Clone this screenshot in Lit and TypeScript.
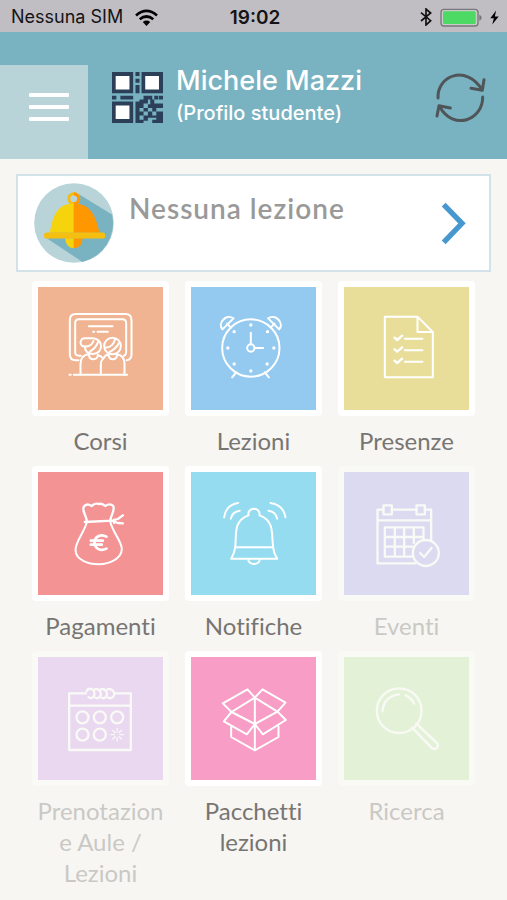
import { LitElement, css, html, svg, SVGTemplateResult } from "lit";
import { customElement, property } from "lit/decorators.js";
import { classMap } from "lit/directives/class-map.js";

interface Tile {
  label: string;
  tone: string;
  viewBox: string;
  icon: SVGTemplateResult;
  disabled?: boolean;
}

const circles = (points: number[][], r: number) =>
  points.map(([x, y]) => svg`<circle cx=${x} cy=${y} r=${r} />`);

const tiles: Tile[] = [
  {
    label: "Corsi",
    tone: "orange",
    viewBox: "43 36 372 369",
    icon: svg`
      <path d="M163 256H155Q137 256 137 238V136Q137 117 155 117H304Q322 117 322 136V238Q322 254 308 256" />
      <path d="M170 242H164Q153 242 153 231V144Q153 133 164 133H295Q306 133 306 144V230Q306 240 299 242" />
      <path d="M194 154H265M207 170H210M220 170H251M136 299H140M149 299H309" />
      <path d="M169 299V266Q169 241 194 238Q195 253 208 253Q220 252 221 240Q231 243 237 251Q230 258 230 268V299M237 251Q243 240 253 238Q254 253 266 253Q278 252 279 238Q301 243 301 266V299" />
      <circle cx="265" cy="213" r="25" />
      <path d="M182 214C166 216 164 191 181 190H207C239 192 238 236 207 237C190 237 182 228 182 214Q201 216 208 198M222 200Q216 219 198 229M242 218Q267 218 273 192M284 205Q275 222 256 231" />`,
  },
  {
    label: "Lezioni",
    tone: "blue",
    viewBox: "36 36 372 369",
    icon: svg`
      <circle cx="214" cy="219" r="86" />
      <circle cx="214" cy="219" r="11" />
      <path d="M214 208V173M225 219H251M158 307L170 292M268 307L256 292M143 146L154 158M285 146L273 158" />
      <path d="M129 163C113 145 139 115 162 130ZM299 163C315 145 289 115 266 130Z" />
      <g class="solid">${circles([[214, 150], [264, 170], [283, 219], [263, 267], [214, 288], [164, 267], [145, 219], [164, 170]], 5)}</g>`,
  },
  {
    label: "Presenze",
    tone: "yellow",
    viewBox: "30 36 372 369",
    icon: svg`
      <path d="M151 125H249L295 171V307H151ZM249 125V171H295" />
      <path d="M211 191H264M211 226H264M211 260H264" />
      <path class="thick" d="M180 188L188 195L203 182M180 223L188 230L203 217M180 257L188 264L203 251" />`,
  },
  {
    label: "Pagamenti",
    tone: "red",
    viewBox: "43 36 372 369",
    icon: svg`
      <path class="thick" d="M188 183C186 166 172 151 179 140Q187 128 203 138Q211 128 223 132Q234 129 243 138Q258 128 267 138C274 151 259 166 258 183M182 186L263 182M263 182L281 177L296 166M264 183L281 189L296 190M270 179V189" />
      <path d="M188 187C179 220 155 241 154 270C155 300 192 313 224 313C257 312 292 296 293 267C291 239 266 220 258 184" />
      <path class="heavy" d="M247 230C229 220 211 231 211 248C212 267 230 275 247 266M200 242H236M200 254H233" />`,
  },
  {
    label: "Notifiche",
    tone: "cyan",
    viewBox: "36 36 372 369",
    icon: svg`
      <path d="M167 262C172 223 160 183 207 166C202 141 244 139 240 166C287 183 275 223 281 262ZM167 262Q165 279 155 296H293Q282 279 281 262M206 297C207 317 240 317 241 297" />
      <path d="M134 172Q139 135 176 129M154 176Q158 155 181 152M318 172Q312 135 273 129M293 176Q289 155 267 152" />`,
  },
  {
    label: "Eventi",
    tone: "lilac",
    viewBox: "30 36 372 369",
    disabled: true,
    icon: svg`
      <path d="M147 149H129V310H242M172 149H246M271 149H290V239M129 181H290" />
      <path d="M147 136H172V163H147ZM246 136H271V163H246Z" />
      <path d="M235 290H151V202H267V239M151 231H267M151 260H235M181 202V290M209 202V290M238 202V249" />
      <circle cx="274" cy="279" r="39" />
      <path d="M257 279L269 291L291 264" />`,
  },
  {
    label: "Prenotazione Aule / Lezioni",
    tone: "violet",
    viewBox: "43 36 372 369",
    disabled: true,
    icon: svg`
      <path d="M185 145H135V315H320V145H272M135 182H320" />
      <path d="M187 139C193 126 211 131 211 146C210 160 199 162 193 156M211 133C226 128 236 146 226 156Q221 162 214 158M230 133C244 128 254 146 245 156Q240 162 233 158M250 133C264 128 277 146 266 156Q260 162 252 158" />
      ${circles([[175, 217], [227, 217], [279, 217], [175, 269], [227, 269]], 18)}
      <path class="fine" d="M279 250V261M279 277V288M260 269H271M287 269H298M266 256L273 263M285 275L292 282M292 256L285 263M273 275L266 282" />`,
  },
  {
    label: "Pacchetti lezioni",
    tone: "pink",
    viewBox: "36 36 372 369",
    icon: svg`
      <path d="M226 158L204 133L130 175L156 201L133 229L202 268L226 237L250 268L319 225L294 200L318 173L249 133ZM156 201L226 158L294 200L226 237ZM226 158V316M155 245V276L226 316L297 276V245" />`,
  },
  {
    label: "Ricerca",
    tone: "green",
    viewBox: "495 36 372 369",
    disabled: true,
    icon: svg`
      <circle cx="659" cy="197" r="67" />
      <path d="M609 199Q612 155 658 148M679 151Q697 159 704 176M711 236L774 296C779 307 768 315 758 310L698 248" />`,
  },
];

@customElement("status-bar")
export class StatusBar extends LitElement {
  static styles = css`
    :host {
      display: grid;
      grid-template-columns: 1fr auto 1fr;
      align-items: center;
      height: 32px;
      padding: 0 8px 0 11px;
      background: #c0bec3;
      color: #141416;
      font: 400 18px/32px Inter, sans-serif;
    }
    .side {
      display: flex;
      align-items: center;
      gap: 12px;
      white-space: nowrap;
    }
    .end {
      justify-content: flex-end;
      gap: 8px;
    }
    .clock {
      padding-top: 2px;
      font-weight: 600;
      font-size: 19px;
    }
    svg {
      display: block;
    }
  `;

  render() {
    return html`
      <div class="side">
        <span>Nessuna SIM</span>
        <svg width="23" height="17" viewBox="408 24 68 50" aria-hidden="true">
          <path d="M411 43Q442 16 473 43M422 54Q442 38 462 54" fill="none" stroke="#000" stroke-width="8" />
          <path d="M431 62Q442 54 453 62L442 74Z" />
        </svg>
      </div>
      <span class="clock">19:02</span>
      <div class="side end">
        <svg width="12" height="18" viewBox="509 24 36 54" aria-hidden="true">
          <path d="M512 38L541 62L527 75V27L541 39L512 63" fill="none" stroke="#111" stroke-width="5" />
        </svg>
        <svg width="42" height="19" viewBox="571 22 126 57" aria-hidden="true">
          <rect x="574" y="26" width="111" height="50" rx="9" fill="#c9cbc9" stroke="#77777b" stroke-width="4" />
          <rect x="580" y="32" width="98" height="38" rx="4" fill="#4cd964" />
          <path d="M689 42Q696 45 696 51T689 60Z" fill="#77777b" />
        </svg>
        <svg width="9" height="15" viewBox="711 29 28 43" aria-hidden="true">
          <path d="M730 29L712 53H723L718 72L738 47H726Z" />
        </svg>
      </div>
    `;
  }
}

@customElement("profile-header")
export class ProfileHeader extends LitElement {
  static styles = css`
    :host {
      display: flex;
      padding-top: 33px;
      background: #79b2c1;
      color: #fff;
      font-family: Inter, sans-serif;
    }
    button {
      border: 0;
      margin: 0;
      padding: 0;
      background: none;
      cursor: pointer;
    }
    svg {
      display: block;
    }
    .menu {
      display: flex;
      align-items: center;
      justify-content: center;
      width: 88px;
      height: 94px;
      padding: 0 0 10px 10px;
      background: #b9d4d9;
    }
    .bars {
      display: grid;
      gap: 8px;
      width: 40px;
    }
    .bar {
      height: 4px;
      border-radius: 1px;
      background: #fff;
    }
    .profile {
      display: flex;
      flex: 1;
      align-items: center;
      height: 64px;
      padding: 0 18px 0 24px;
    }
    .who {
      flex: 1;
      padding-left: 13px;
    }
    h1,
    p {
      margin: 0;
      font-weight: 500;
    }
    h1 {
      font-size: 27px;
      line-height: 32px;
    }
    p {
      font-size: 20px;
      line-height: 32px;
    }
  `;

  render() {
    return html`
      <button class="menu" aria-label="Menu">
        <span class="bars"><span class="bar"></span><span class="bar"></span><span class="bar"></span></span>
      </button>
      <div class="profile">
        <svg width="51" height="51" viewBox="0 0 152 152" fill="#2b4058" aria-hidden="true">
          <path d="M0 0H63V63H0ZM88 0H152V63H88ZM0 88H63V152H0Z" />
          <path d="M11 12H52V52H11ZM99 12H140V52H99ZM11 100H52V140H11Z" fill="#fff" />
          <path d="M70 0H82V12H70ZM70 20H82V32H70ZM70 39H82V63H70ZM0 71H13V82H0ZM25 71H63V82H25ZM70 88H82V152H70ZM94 71H120V82H107V94H94V107H82V82H94ZM126 71H138V82H126ZM140 71H152V82H140ZM114 82H126V94H140V107H107V96H114ZM140 94H152V107H140ZM94 107H107V118H94ZM107 118H120V130H132V118H152V152H120V142H132V136H107V145H94V130H107ZM120 107H132V118H120ZM82 118H94V130H82ZM82 142H94V152H82Z" />
        </svg>
        <div class="who">
          <h1>Michele Mazzi</h1>
          <p>(Profilo studente)</p>
        </div>
        <button aria-label="Aggiorna">
          <svg width="56" height="53" viewBox="542 212 168 159" fill="none" stroke="#505558" stroke-width="9" stroke-linecap="round" stroke-linejoin="round" aria-hidden="true">
            <path d="M557 293C554 225 642 192 689 268M695 238L690 270L656 264M691 290C692 359 604 393 562 319M554 347L560 316L594 323" />
          </svg>
        </button>
      </div>
    `;
  }
}

@customElement("next-lesson")
export class NextLesson extends LitElement {
  static styles = css`
    :host {
      display: block;
    }
    .card {
      display: flex;
      align-items: center;
      box-sizing: border-box;
      width: 100%;
      height: 98px;
      padding: 0 23px 0 16px;
      border: 2px solid #d3e1e9;
      background: #fff;
      color: #999;
      font: 600 28px/36px Lato, sans-serif;
      letter-spacing: 1px;
      text-align: left;
      cursor: pointer;
    }
    .text {
      flex: 1;
      align-self: flex-start;
      padding: 14px 0 0 15px;
    }
    svg {
      display: block;
    }
  `;

  render() {
    return html`
      <button class="card">
        <svg width="80" height="80" viewBox="102 53 239 239" aria-hidden="true">
          <circle cx="221.500" cy="172.500" r="119" fill="#b9d4d9" />
          <path d="M235 86L335 147A119 119 0 0 1 247 289L140 218Z" fill="#79b2c1" />
          <circle cx="221" cy="100" r="15" fill="#b9d4d9" stroke="#f3bd12" stroke-width="9" />
          <path d="M221 81A19 19 0 0 1 221 119V110A10 10 0 0 0 221 90Z" fill="#ff9800" />
          <path d="M149 202C157 158 167 114 221 114V202Z" fill="#f6d40d" />
          <path d="M221 114C275 114 287 158 298 202H221Z" fill="#ff9800" />
          <path d="M195 218H221V248Q196 246 195 218Z" fill="#f6d40d" />
          <path d="M221 218H247Q246 247 221 248Z" fill="#ff9800" />
          <rect x="132" y="201" width="183" height="18" rx="8" fill="#f5bf12" />
        </svg>
        <span class="text">Nessuna lezione</span>
        <svg width="25" height="43" viewBox="565 107 75 129" fill="none" stroke="#4898d0" stroke-width="16" aria-hidden="true">
          <path d="M573 115L628 171L573 228" />
        </svg>
      </button>
    `;
  }
}

@customElement("menu-tile")
export class MenuTile extends LitElement {
  @property({ attribute: false }) tile!: Tile;

  static styles = css`
    :host {
      display: block;
      min-width: 0;
    }
    .tile {
      display: block;
      width: 100%;
      margin: 0;
      padding: 0;
      border: 0;
      background: none;
      color: #777572;
      font: 400 24px/31px Lato, sans-serif;
      font-variant-ligatures: no-common-ligatures;
      text-align: center;
      cursor: pointer;
    }
    .tile:disabled {
      opacity: 0.35;
      cursor: default;
    }
    .art {
      display: block;
      box-sizing: border-box;
      aspect-ratio: 137 / 135;
      border: 6px solid #fff;
      border-radius: 4px;
    }
    svg {
      display: block;
      width: 100%;
      height: 100%;
      fill: none;
      stroke: #fff;
      stroke-width: 6px;
      stroke-linecap: round;
      stroke-linejoin: round;
    }
    .tile:disabled svg {
      stroke-width: 7px;
    }
    .fine {
      stroke-width: 4px;
    }
    .thick {
      stroke-width: 7px;
    }
    .heavy {
      stroke-width: 8px;
    }
    .solid {
      fill: #fff;
      stroke: none;
    }
    .label {
      display: block;
      margin-top: 9px;
      overflow-wrap: anywhere;
    }
    .orange { background: #f0b492; }
    .blue { background: #95caf0; }
    .yellow { background: #e8de9a; }
    .red { background: #f39394; }
    .cyan { background: #95dcf1; }
    .lilac { background: #a8a8ee; }
    .violet { background: #d0a2ec; }
    .pink { background: #f89dc5; }
    .green { background: #c0eba8; }
  `;

  render() {
    const { label, tone, viewBox, icon, disabled } = this.tile;
    return html`
      <button class="tile" ?disabled=${disabled}>
        <span class=${classMap({ art: true, [tone]: true })}>
          <svg viewBox=${viewBox} aria-hidden="true">${icon}</svg>
        </span>
        <span class="label">${label}</span>
      </button>
    `;
  }
}

@customElement("app-root")
export class AppRoot extends LitElement {
  static styles = css`
    :host {
      display: block;
      min-height: 100vh;
      background: #f7f6f2;
    }
    next-lesson {
      margin: 15px 16px 0;
    }
    .grid {
      display: grid;
      grid-template-columns: repeat(3, minmax(0, 1fr));
      gap: 10px 16px;
      padding: 9px 32px;
    }
  `;

  render() {
    return html`
      <status-bar></status-bar>
      <profile-header></profile-header>
      <main>
        <next-lesson></next-lesson>
        <nav class="grid" aria-label="Sezioni">
          ${tiles.map((tile) => html`<menu-tile .tile=${tile}></menu-tile>`)}
        </nav>
      </main>
    `;
  }
}
